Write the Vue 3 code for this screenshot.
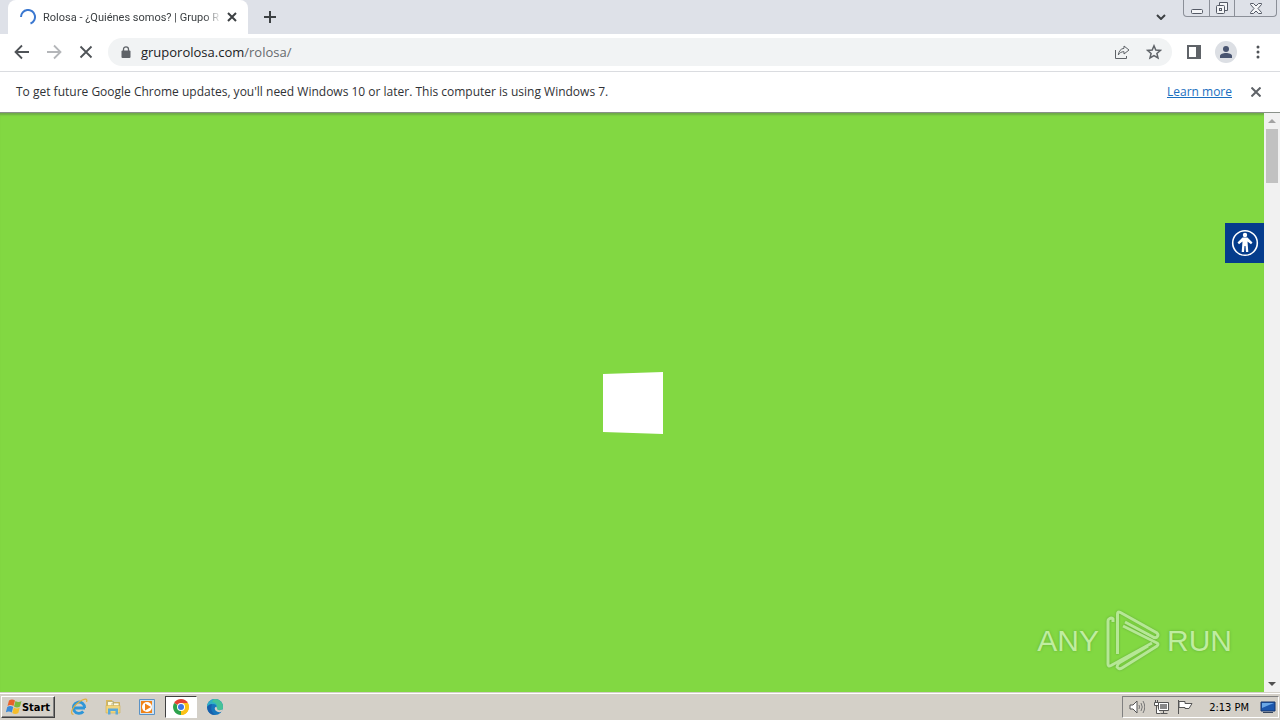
<template>
  <div class="screen">
    <header class="tab-strip">
      <div class="tab">
        <svg class="spinner" viewBox="0 0 16 16">
          <path d="M1 8A7 7 0 1 1 10.500 14.500" />
        </svg>
        <span class="tab-title">{{ tabTitle }}</span>
        <button class="tab-close" aria-label="Close tab">
          <svg viewBox="0 0 10 10"><path d="M1 1l8 8M9 1l-8 8" /></svg>
        </button>
      </div>
      <button class="new-tab" aria-label="New tab">
        <svg viewBox="0 0 12 12"><path d="M6 0v12M0 6h12" /></svg>
      </button>
      <button class="tab-search" aria-label="Search tabs">
        <svg viewBox="0 0 10 6"><path d="M1 1l4 4 4-4" /></svg>
      </button>
      <div class="window-controls">
        <button aria-label="Minimize">
          <svg viewBox="0 0 14 14"><rect x="1.500" y="8.500" width="11" height="4" rx="1" /></svg>
        </button>
        <button aria-label="Restore">
          <svg viewBox="0 0 14 14">
            <path d="M4.500 4.500v-3h8v8h-3" />
            <rect x="1.500" y="4.500" width="8" height="8" rx="1" />
            <rect x="4.500" y="7.500" width="2" height="2" />
          </svg>
        </button>
        <button class="wide" aria-label="Close">
          <svg viewBox="0 0 14 14">
            <path d="M1.500 2.500h3L7 5l2.500-2.500h3v1L9 7.500l3.500 4v1h-3L7 10l-2.500 2.500h-3v-1L5 7.500l-3.500-4z" />
          </svg>
        </button>
      </div>
    </header>

    <nav class="toolbar">
      <button class="nav-btn" aria-label="Back">
        <svg viewBox="0 0 16 16"><path d="M15 8H2M8 1.500L1.500 8 8 14.500" /></svg>
      </button>
      <button class="nav-btn disabled" aria-label="Forward" disabled>
        <svg viewBox="0 0 16 16"><path d="M1 8h13M8 1.500L14.500 8 8 14.500" /></svg>
      </button>
      <button class="nav-btn" aria-label="Stop">
        <svg viewBox="0 0 16 16"><path d="M2.500 2.500l11 11M13.500 2.500l-11 11" /></svg>
      </button>
      <div class="omnibox">
        <svg class="lock" viewBox="0 0 10 12">
          <path d="M2.500 5V3.300a2.500 2.500 0 0 1 5 0V5" fill="none" stroke="#5f6368" stroke-width="1.300" />
          <rect x="0.500" y="4.500" width="9" height="7.500" rx="1" fill="#5f6368" />
        </svg>
        <a class="url" href="#"><span class="host">gruporolosa.com</span>/rolosa/</a>
        <button class="omni-btn" aria-label="Share">
          <svg viewBox="0 0 16 16">
            <path d="M1.500 6v8.500h11V12" />
            <path d="M10 2l5 4-5 4V7.700C7.300 7.700 5.500 8.800 4.300 11 4.700 7.500 6.500 4.700 10 4.300z" />
          </svg>
        </button>
        <button class="omni-btn" aria-label="Bookmark">
          <svg viewBox="0 0 16 16">
            <path d="M8 1.800l1.800 4.200 4.600.4-3.500 3 1.100 4.500L8 11.500l-4 2.400 1.100-4.500-3.500-3 4.600-.4z" stroke-width="1.500" />
          </svg>
        </button>
      </div>
      <button class="side-panel" aria-label="Side panel">
        <svg viewBox="0 0 14 14">
          <rect x="1" y="1" width="12" height="12" fill="none" stroke="#5f6368" stroke-width="2" />
          <path d="M9 1h4v12H9z" fill="#5f6368" />
        </svg>
      </button>
      <button class="profile" aria-label="Profile">
        <svg viewBox="0 0 12 12">
          <circle cx="6" cy="3" r="3" />
          <path d="M0 12v-2c0-2 3-3 6-3s6 1 6 3v2z" />
        </svg>
      </button>
      <button class="menu" aria-label="Menu">
        <svg viewBox="0 0 4 14">
          <circle cx="2" cy="2" r="1.500" /><circle cx="2" cy="7" r="1.500" /><circle cx="2" cy="12" r="1.500" />
        </svg>
      </button>
    </nav>

    <section class="infobar">
      <p>{{ notice }}</p>
      <a href="#">Learn more</a>
      <button class="infobar-close" aria-label="Dismiss">
        <svg viewBox="0 0 10 10"><path d="M0.500 0.500l9 9M9.500 0.500l-9 9" /></svg>
      </button>
    </section>

    <div class="viewport">
      <main class="page">
        <svg class="loader" viewBox="0 0 62 62"><path d="M2 2L62 0V62L2 60z" fill="#fff" /></svg>
        <button class="accessibility" aria-label="Accessibility">
          <svg viewBox="0 0 28 28">
            <circle cx="14" cy="14" r="12.300" fill="none" stroke="#fff" stroke-width="1.600" />
            <circle cx="14" cy="6" r="2.200" fill="#fff" />
            <path d="M11.500 8.500h5l5 5-1.500 1.700-3.500-2.700.8 10.500h-2.300L14.500 17h-1L13 23h-2.300l.8-10.500L8 15.200l-1.500-1.700z" fill="#fff" />
          </svg>
        </button>
        <div class="watermark">
          <span>ANY</span>
          <svg viewBox="0 0 56 62">
            <path d="M8 12V9q-1-2-4 0-1 .5-1 2V54q0 3 3 1.500L47 33" />
            <path d="M12.500 44V4q0-3 3-1.500L52 23q2 2 0 4-2 1.500-4 0L20 12" />
            <path d="M18 16L52 33q2 1 0 3L17 58q-3 2-5-1 0-2 2-4L43 36" />
          </svg>
          <span>RUN</span>
        </div>
      </main>
      <div class="scrollbar">
        <svg class="arrow up" viewBox="0 0 8 4"><path d="M0 4l4-4 4 4z" /></svg>
        <div class="thumb"></div>
        <svg class="arrow down" viewBox="0 0 8 4"><path d="M0 0h8L4 4z" /></svg>
      </div>
    </div>

    <footer class="taskbar">
      <button class="start">
        <svg viewBox="0 0 16 16">
          <path d="M3 1.500q3-2 6 0L7.500 7q-3-2-6 0z" fill="#e8622a" />
          <path d="M9.500 2q3 2 6 0L14 7.500q-3 2-6 0z" fill="#7bb83c" />
          <path d="M1.200 8q3-2 6 0L5.800 13.500q-3-2-6 0z" fill="#3b8ad8" />
          <path d="M7.800 8.500q3 2 6 0L12.300 14q-3 2-6 0z" fill="#f5bd2b" />
        </svg>
        Start
      </button>
      <div class="tasks">
        <button aria-label="Internet Explorer">
          <svg viewBox="0 0 18 18">
            <path d="M15 10H4.500M14.700 10A5.700 5.700 0 1 0 13.300 13.500" fill="none" stroke="#2f96d8" stroke-width="2.800" />
            <path d="M3.500 16.500C-1 16 3 8 9 4s9-3.500 7.500 0" fill="none" stroke="#e0b040" stroke-width="1.200" />
          </svg>
        </button>
        <button aria-label="File Explorer">
          <svg viewBox="0 0 18 18">
            <path d="M2 2h6l1 2h7v11H2z" fill="#dcb95a" />
            <path d="M3.500 3.500h6v5h-6zM8 5h7v4H8z" fill="#fffbe0" stroke="#a9a06a" stroke-width="0.700" />
            <path d="M2 7.500h14V15H2z" fill="#f2d57c" stroke="#cfae52" stroke-width="0.600" />
            <path d="M4 16.500v-6h10v6h-2.500V13h-5v3.500z" fill="#5ba9d8" />
          </svg>
        </button>
        <button aria-label="Media Player">
          <svg viewBox="0 0 18 18">
            <path d="M1.500 1.500h15v15h-15z" fill="#cfe2f2" stroke="#5a92c5" />
            <rect x="3" y="3" width="11" height="12" fill="#f08318" />
            <circle cx="9" cy="9" r="5" fill="#fff" />
            <path d="M7 5.500l6 3.500-6 3.500z" fill="#f08318" />
          </svg>
        </button>
        <button class="active" aria-label="Chrome">
          <svg viewBox="0 0 18 18">
            <path d="M9 9L2.100 5A8 8 0 0 1 15.900 5z" fill="#e34133" />
            <path d="M9 9l6.900-4A8 8 0 0 1 9 17z" fill="#fbc116" />
            <path d="M9 9v8A8 8 0 0 1 2.100 5z" fill="#2da24c" />
            <path d="M9 5h6.900A8 8 0 0 1 9 17l3.500-6z" fill="#fbc116" />
            <circle cx="9" cy="9" r="4" fill="#fff" /><circle cx="9" cy="9" r="3" fill="#3c76e5" />
          </svg>
        </button>
        <button aria-label="Edge">
          <svg viewBox="0 0 18 18">
            <circle cx="9" cy="9" r="8" fill="#1676bd" />
            <path d="M1 9a8 8 0 0 1 16 0q0 4-5 3-2-.500-1-2 0-4-4-4-4 0-6 3z" fill="#2fb0c6" />
            <path d="M8 1a8 8 0 0 1 9 8q0 4-5 3-2-.500-1-2 1-5-5-6z" fill="#57cf78" opacity=".6" />
            <path d="M10.500 8.500q-3 1-1 4 3 3 6.500 1l1-2q-6 2-6-1z" fill="#d4d0c8" />
            <path d="M1 9q2-3 5-3-2 5 1 9l2 2Q2 17 1 9z" fill="#175fab" />
          </svg>
        </button>
      </div>
      <div class="tray">
        <svg class="tray-icon" viewBox="0 0 16 16">
          <path d="M1 6h3l4-4v12l-4-4H1z" fill="#fff" stroke="#555" />
          <path d="M10 6q1 2 0 4M12 4q2.500 4 0 8M14 2q3.500 6 0 12" fill="none" stroke="#777" />
        </svg>
        <svg class="tray-icon" viewBox="0 0 16 16">
          <path d="M5.500 3.500h10v8h-10zM7.500 14.500h7M10.500 11.500v3" fill="#fff" stroke="#555" />
          <path d="M7 5h7v5H7z" fill="#888" />
          <path d="M1.500 3.500h4v3h-4zM2.500 1v2M4.500 1v2M3.500 7v7.500h4" fill="#fff" stroke="#555" />
        </svg>
        <svg class="tray-icon" viewBox="0 0 16 16">
          <path d="M1.500 1v14M2 2.500h6v2h7l-3 5H8v-1H2z" fill="#fff" stroke="#555" />
        </svg>
        <time>{{ clock }}</time>
        <svg class="tray-icon" viewBox="0 0 16 16">
          <path d="M1 3h14v9H1z" fill="#1c57ad" stroke="#17376c" />
          <path d="M2 4h12L2 9z" fill="#6aa7e6" />
          <path d="M3 13h10v1H3z" fill="#34455e" />
        </svg>
      </div>
    </footer>
  </div>
</template>

<script setup>
const tabTitle = 'Rolosa - ¿Quiénes somos? | Grupo R'
const notice =
  "To get future Google Chrome updates, you'll need Windows 10 or later. This computer is using Windows 7."
const clock = '2:13 PM'
</script>

<style>
body {
  margin: 0;
}
</style>

<style scoped>
.screen {
  display: flex;
  flex-direction: column;
  height: 100vh;
  background: #fff;
  color: #3c4043;
  font-family: "Open Sans", "Noto Sans", sans-serif;
  font-size: 12px;
}

button {
  display: flex;
  align-items: center;
  justify-content: center;
  flex: none;
  padding: 0;
  border: 0;
  background: none;
  font: inherit;
}

svg {
  display: block;
  flex: none;
}

.tab-strip {
  display: flex;
  align-items: center;
  flex: none;
  height: 34px;
  padding: 0 3px 0 8px;
  background: #dee1e8;
}

.tab {
  display: flex;
  align-items: center;
  box-sizing: border-box;
  width: 240px;
  height: 34px;
  padding: 0 10px 0 12px;
  border-radius: 8px 8px 0 0;
  background: #fff;
}

.spinner {
  width: 16px;
  height: 16px;
  fill: none;
  stroke: #3b78d0;
  stroke-width: 2;
}

.tab-title {
  flex: 1;
  margin: 0 4px 0 7px;
  font-family: Roboto, sans-serif;
  font-size: 11px;
  white-space: nowrap;
  mask-image: linear-gradient(to right, #000 90%, transparent);
}

.tab-close svg {
  width: 10px;
  height: 10px;
  margin: 0 1px;
}

.tab-close svg,
.new-tab svg,
.tab-search svg {
  fill: none;
  stroke: #3c4043;
  stroke-width: 2;
}

.new-tab {
  width: 28px;
  height: 28px;
  margin-left: 8px;
}

.new-tab svg {
  width: 12px;
  height: 12px;
}

.tab-search {
  width: 24px;
  height: 24px;
  margin-left: auto;
}

.tab-search svg {
  width: 10px;
  height: 6px;
}

.window-controls {
  display: flex;
  align-self: flex-start;
  height: 16px;
  margin-left: 10px;
  border: 1px solid #8b8f98;
  border-top: 0;
  border-radius: 0 0 4px 4px;
}

.window-controls button {
  width: 25px;
}

.window-controls button + button {
  border-left: 1px solid #8b8f98;
}

.window-controls .wide {
  width: 42px;
}

.window-controls svg {
  width: 14px;
  height: 14px;
  fill: #f4f5f7;
  stroke: #555a66;
}

.toolbar {
  display: flex;
  align-items: center;
  flex: none;
  box-sizing: border-box;
  height: 38px;
  padding: 0 8px 1px 6px;
  border-bottom: 1px solid #dadce0;
}

.nav-btn {
  width: 32px;
  height: 32px;
}

.nav-btn svg {
  width: 16px;
  height: 16px;
  fill: none;
  stroke: #4f5357;
  stroke-width: 1.8;
}

.nav-btn.disabled svg {
  stroke: #b4b6b9;
}

.omnibox {
  display: flex;
  align-items: center;
  flex: 1;
  height: 28px;
  margin-left: 6px;
  padding: 0 2px 0 13px;
  border-radius: 14px;
  background: #f1f3f4;
}

.lock {
  width: 10px;
  height: 12px;
}

.url {
  flex: 1;
  margin-left: 10px;
  color: #666a6e;
  font-size: 13px;
  text-decoration: none;
}

.host {
  color: #202124;
}

.omni-btn {
  width: 32px;
  height: 28px;
}

.omni-btn svg {
  width: 16px;
  height: 16px;
  fill: none;
  stroke: #5f6368;
}

.side-panel {
  width: 28px;
  height: 28px;
  margin-left: 8px;
}

.side-panel svg {
  width: 14px;
  height: 14px;
}

.profile {
  width: 22px;
  height: 22px;
  margin-left: 7px;
  border-radius: 50%;
  background: #dcdfe4;
}

.profile svg {
  width: 12px;
  height: 12px;
  fill: #485470;
}

.menu {
  width: 28px;
  height: 28px;
  margin-left: 7px;
}

.menu svg {
  width: 4px;
  height: 14px;
  fill: #4f5357;
}

.infobar {
  display: flex;
  align-items: center;
  flex: none;
  box-sizing: border-box;
  height: 41px;
  padding: 0 16px 1px;
  border-bottom: 1px solid #8a918a;
}

.infobar p {
  flex: 1;
  margin: 0;
  color: #303236;
}

.infobar a {
  color: #1a6fc0;
}

.infobar-close {
  width: 16px;
  height: 24px;
  margin-left: 16px;
}

.infobar-close svg {
  width: 10px;
  height: 10px;
  fill: none;
  stroke: #5f6368;
  stroke-width: 2;
}

.viewport {
  display: flex;
  flex: 1;
  min-height: 0;
}

.page {
  position: relative;
  display: flex;
  align-items: center;
  justify-content: center;
  flex: 1;
  background: #82d842;
  box-shadow: inset 0 3px 2px -1px #6eac46;
}

.loader {
  width: 62px;
  height: 62px;
}

.accessibility {
  position: absolute;
  top: 110px;
  right: 0;
  width: 39px;
  height: 40px;
  background: #043c8c;
}

.accessibility svg {
  width: 28px;
  height: 28px;
}

.watermark {
  position: absolute;
  right: 32px;
  bottom: 20px;
  display: flex;
  align-items: center;
  gap: 6px;
  color: #c0eda0;
  font-family: "Liberation Sans", sans-serif;
  font-size: 30px;
  line-height: 62px;
  text-shadow: 0 0 3px #62ad38;
}

.watermark svg {
  width: 56px;
  height: 62px;
  fill: none;
  stroke: #b6e796;
  stroke-width: 3;
  filter: drop-shadow(0 0 1px #62ad38);
}

.scrollbar {
  display: flex;
  flex-direction: column;
  align-items: center;
  width: 16px;
  background: #f1f1f1;
}

.arrow {
  width: 8px;
  height: 4px;
  margin: 6px 0;
}

.up {
  fill: #a3a3a3;
}

.down {
  margin-top: auto;
  fill: #505050;
}

.thumb {
  width: 12px;
  height: 54px;
  background: #c1c1c1;
}

.taskbar {
  display: flex;
  align-items: center;
  flex: none;
  box-sizing: border-box;
  height: 28px;
  padding: 1px 1px 0;
  border-top: 1px solid #d4d0c8;
  background: #d4d0c8;
  box-shadow: inset 0 1px #fff;
}

.start {
  box-sizing: border-box;
  width: 54px;
  height: 22px;
  border: 1px solid;
  border-color: #fff #404040 #404040 #fff;
  box-shadow: inset -1px -1px #808080;
  color: #000;
  font-family: "DejaVu Sans Condensed", "DejaVu Sans", sans-serif;
  font-size: 11px;
  font-weight: bold;
}

.start svg {
  width: 16px;
  height: 16px;
}

.tasks {
  display: flex;
  gap: 2px;
  margin-left: 8px;
}

.tasks button {
  box-sizing: border-box;
  width: 32px;
  height: 22px;
}

.tasks svg {
  width: 18px;
  height: 18px;
}

.tasks .active {
  border: 1px solid;
  border-color: #404040 #fff #fff #404040;
  background: #fff;
}

.tray {
  display: flex;
  align-items: center;
  gap: 8px;
  box-sizing: border-box;
  height: 22px;
  margin-left: auto;
  padding: 0 2px 0 6px;
  border: 1px solid;
  border-color: #808080 #fff #fff #808080;
}

.tray-icon {
  width: 16px;
  height: 16px;
}

.tray time {
  margin: 0 3px 0 8px;
  color: #000;
  font-family: "DejaVu Sans Condensed", "DejaVu Sans", sans-serif;
  font-size: 11px;
}
</style>
